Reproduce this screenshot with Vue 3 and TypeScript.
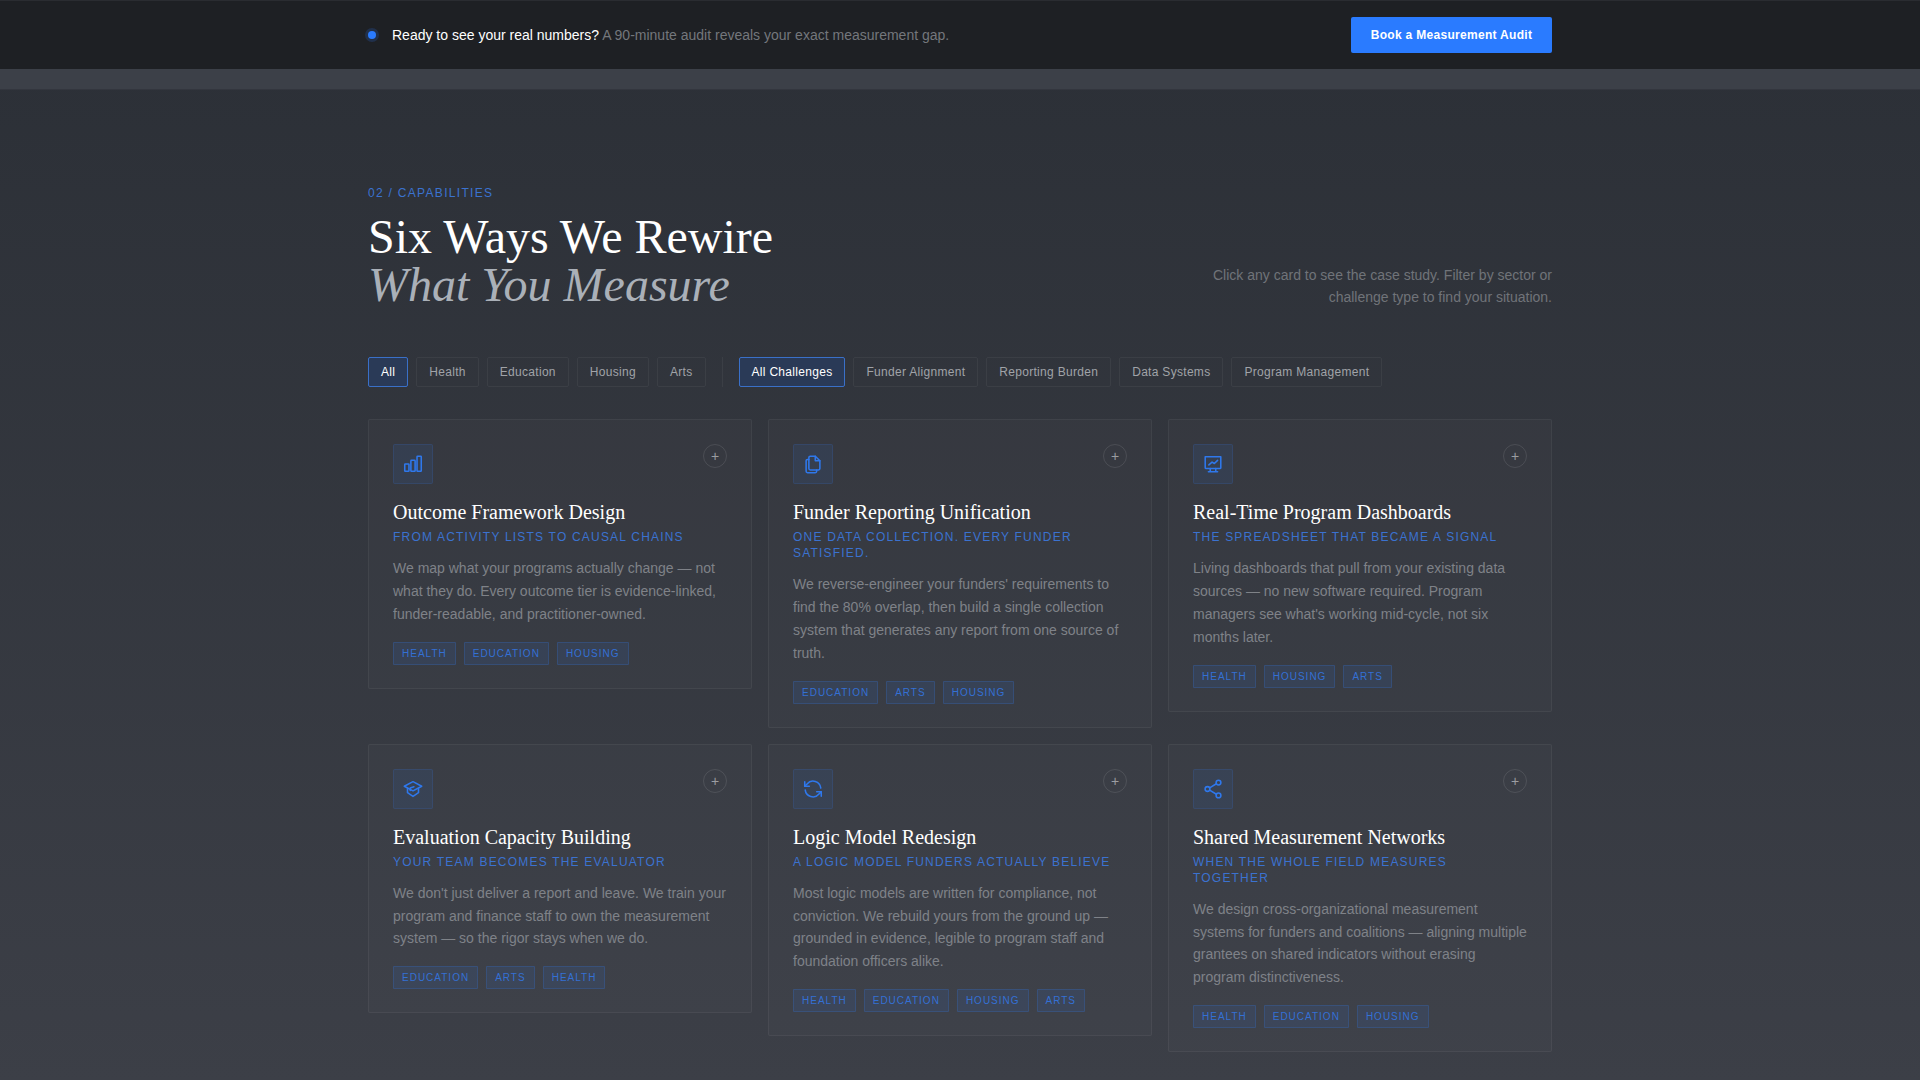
<script setup lang="ts">
interface Card { icon: string; title: string; sub: string; body: string; tags: string[] }
const sectors = ['All', 'Health', 'Education', 'Housing', 'Arts']
const challenges = ['All Challenges', 'Funder Alignment', 'Reporting Burden', 'Data Systems', 'Program Management']
const cards: Card[] = [
  { icon: 'bars', title: 'Outcome Framework Design', sub: 'From activity lists to causal chains', body: 'We map what your programs actually change — not what they do. Every outcome tier is evidence-linked, funder-readable, and practitioner-owned.', tags: ['Health', 'Education', 'Housing'] },
  { icon: 'files', title: 'Funder Reporting Unification', sub: 'One data collection. Every funder satisfied.', body: "We reverse-engineer your funders' requirements to find the 80% overlap, then build a single collection system that generates any report from one source of truth.", tags: ['Education', 'Arts', 'Housing'] },
  { icon: 'board', title: 'Real-Time Program Dashboards', sub: 'The spreadsheet that became a signal', body: "Living dashboards that pull from your existing data sources — no new software required. Program managers see what's working mid-cycle, not six months later.", tags: ['Health', 'Housing', 'Arts'] },
  { icon: 'cap', title: 'Evaluation Capacity Building', sub: 'Your team becomes the evaluator', body: "We don't just deliver a report and leave. We train your program and finance staff to own the measurement system — so the rigor stays when we do.", tags: ['Education', 'Arts', 'Health'] },
  { icon: 'cycle', title: 'Logic Model Redesign', sub: 'A logic model funders actually believe', body: 'Most logic models are written for compliance, not conviction. We rebuild yours from the ground up — grounded in evidence, legible to program staff and foundation officers alike.', tags: ['Health', 'Education', 'Housing', 'Arts'] },
  { icon: 'share', title: 'Shared Measurement Networks', sub: 'When the whole field measures together', body: 'We design cross-organizational measurement systems for funders and coalitions — aligning multiple grantees on shared indicators without erasing program distinctiveness.', tags: ['Health', 'Education', 'Housing'] },
]
</script>

<template>
  <div class="page">
    <header class="cta">
      <div class="cta-inner">
        <div class="cta-msg">
          <span class="dot"></span>
          <p><strong>Ready to see your real numbers?</strong> <span>A 90-minute audit reveals your exact measurement gap.</span></p>
        </div>
        <button class="cta-btn">Book a Measurement Audit</button>
      </div>
    </header>
    <div class="band"></div>

    <main class="section">
      <div class="eyebrow">02 / CAPABILITIES</div>
      <div class="head">
        <h1>Six Ways We Rewire<br /><em>What You Measure</em></h1>
        <p class="hint">Click any card to see the case study. Filter by sector or challenge type to find your situation.</p>
      </div>

      <div class="filters">
        <button v-for="(s, i) in sectors" :key="s" class="chip" :class="{ on: i === 0 }">{{ s }}</button>
        <span class="sep"></span>
        <button v-for="(c, i) in challenges" :key="c" class="chip" :class="{ on: i === 0 }">{{ c }}</button>
      </div>

      <div class="grid">
        <article v-for="c in cards" :key="c.title" class="card">
          <div class="card-top">
            <div class="ico">
              <svg viewBox="0 0 24 24" width="22" height="22" fill="none" stroke="currentColor" stroke-width="1.7" stroke-linecap="round" stroke-linejoin="round">
                <template v-if="c.icon === 'bars'">
                  <rect x="3" y="12" width="4.6" height="8" rx="0.6" />
                  <rect x="9.7" y="8" width="4.6" height="12" rx="0.6" />
                  <rect x="16.4" y="3.500" width="4.6" height="16.500" rx="0.6" />
                </template>
                <template v-else-if="c.icon === 'files'">
                  <path d="M9 3.500h5.500l5 5V17a1.500 1.500 0 0 1-1.500 1.500H9A1.500 1.500 0 0 1 7.500 17V5A1.500 1.500 0 0 1 9 3.500z" />
                  <path d="M14.500 3.500V8.500h5" />
                  <path d="M7.500 7H6A1.500 1.500 0 0 0 4.500 8.500V20A1.500 1.500 0 0 0 6 21.500h8.500A1.500 1.500 0 0 0 16 20v-1.500" />
                </template>
                <template v-else-if="c.icon === 'board'">
                  <path d="M3.500 4h17v12a1 1 0 0 1-1 1h-15a1 1 0 0 1-1-1z" />
                  <path d="M7.500 13l3.500-3 2.500 1.500 3.500-3.500" />
                  <path d="M9 17v3.500M15 17v3.500M7 20.500h10" />
                </template>
                <template v-else-if="c.icon === 'cap'">
                  <path d="M12 4l9.500 5-9.500 5-9.500-5z" />
                  <path d="M6 11.500V16l6 4 6-4v-4.500" />
                  <path d="M9 13.500v-2.500l4-1.500" />
                </template>
                <template v-else-if="c.icon === 'cycle'">
                  <path d="M20.500 11a8.500 8.500 0 0 0-15-4.500L3 9" />
                  <path d="M3 4v5h5" />
                  <path d="M3.500 13a8.500 8.500 0 0 0 15 4.500L21 15" />
                  <path d="M21 20v-5h-5" />
                </template>
                <template v-else>
                  <circle cx="18" cy="5" r="2.600" />
                  <circle cx="6" cy="12" r="2.600" />
                  <circle cx="18" cy="19" r="2.600" />
                  <path d="M8.300 10.700l7.400-4.400M8.300 13.300l7.400 4.400" />
                </template>
              </svg>
            </div>
            <span class="plus">+</span>
          </div>
          <h3>{{ c.title }}</h3>
          <div class="sub">{{ c.sub }}</div>
          <p class="body">{{ c.body }}</p>
          <div class="tags"><span v-for="t in c.tags" :key="t" class="tag">{{ t }}</span></div>
        </article>
      </div>
    </main>
  </div>
</template>

<style>
html, body { margin: 0; padding: 0; background: #2c3037; }
</style>

<style scoped>
.page {
  height: 1080px;
  overflow: hidden;
  background: linear-gradient(180deg, #2b2f36 0%, #3c3f47 100%);
  font-family: "Liberation Sans", Arial, sans-serif;
}
.cta {
  height: 69px;
  box-sizing: border-box;
  background: #1e2024;
  border-top: 1px solid #2a2c31;
}
.cta-inner {
  width: 1184px;
  height: 100%;
  margin: 0 auto;
  display: flex;
  align-items: center;
  justify-content: space-between;
}
.cta-msg { display: flex; align-items: center; gap: 16px; }
.cta-msg p { margin: 0; font-size: 14px; color: #74777c; }
.cta-msg strong { font-weight: 400; color: #fff; }
.dot {
  width: 8px;
  height: 8px;
  border-radius: 50%;
  background: #2a7bff;
  box-shadow: 0 0 0 3px rgba(42, 123, 255, 0.18);
}
.cta-btn {
  width: 201px;
  height: 36px;
  padding: 0;
  border: 0;
  border-radius: 2px;
  background: #2a7bff;
  color: #fff;
  font: 700 12px "Liberation Sans", Arial, sans-serif;
  letter-spacing: 0.3px;
}
.band {
  height: 21px;
  background: #3c4048;
  border-bottom: 1px solid #33363e;
  box-sizing: border-box;
}
.section { width: 1184px; margin: 0 auto; padding-top: 96px; }
.eyebrow { font-size: 12px; line-height: 14px; letter-spacing: 1.3px; color: #3b72d0; }
.head { display: flex; justify-content: space-between; align-items: flex-end; margin-top: 13px; }
h1 {
  margin: 0;
  font: 400 48px/48px "Liberation Serif", "Times New Roman", serif;
  color: #fff;
}
h1 em { color: #aab0b8; }
.hint {
  width: 360px;
  margin: 0 0 1px;
  text-align: right;
  font-size: 14px;
  line-height: 22px;
  color: #707379;
}
.filters { display: flex; align-items: center; gap: 8px; margin-top: 48px; }
.chip {
  height: 30px;
  box-sizing: border-box;
  padding: 0 12px;
  border: 1px solid rgba(255, 255, 255, 0.05);
  border-radius: 2px;
  background: transparent;
  color: #a0a3a8;
  font: 400 12px "Liberation Sans", Arial, sans-serif;
  letter-spacing: 0.3px;
}
.chip.on { background: #2a3a57; border-color: #3a70c8; color: #fff; }
.sep { width: 1px; height: 30px; margin: 0 8px; background: rgba(255, 255, 255, 0.05); }
.grid {
  display: grid;
  grid-template-columns: repeat(3, 1fr);
  gap: 16px;
  align-items: start;
  margin-top: 32px;
}
.card {
  box-sizing: border-box;
  padding: 24px 24px 23px;
  border: 1px solid rgba(255, 255, 255, 0.05);
  border-radius: 2px;
  background: rgba(255, 255, 255, 0.02);
}
.card-top { display: flex; justify-content: space-between; align-items: flex-start; margin-bottom: 16px; }
.ico {
  width: 40px;
  height: 40px;
  box-sizing: border-box;
  display: flex;
  align-items: center;
  justify-content: center;
  border: 1px solid rgba(53, 106, 196, 0.2);
  border-radius: 2px;
  background: rgba(53, 106, 196, 0.12);
  color: #2f78ec;
}
.plus {
  width: 24px;
  height: 24px;
  box-sizing: border-box;
  display: flex;
  align-items: center;
  justify-content: center;
  border: 1px solid rgba(255, 255, 255, 0.1);
  border-radius: 50%;
  color: #9a9da2;
  font-size: 14px;
  line-height: 1;
}
h3 {
  margin: 0 0 5px;
  font: 400 20px/24px "Liberation Serif", "Times New Roman", serif;
  color: #fff;
}
.sub {
  font-size: 12px;
  line-height: 16px;
  letter-spacing: 1.2px;
  padding-right: 4px;
  text-transform: uppercase;
  color: #3b72d0;
}
.body {
  margin: 12px 0 0;
  font-size: 14px;
  line-height: 22.9px;
  color: #7f8288;
}
.tags { display: flex; gap: 8px; margin-top: 16px; }
.tag {
  box-sizing: border-box;
  height: 23px;
  padding: 0 8px;
  display: flex;
  align-items: center;
  border: 1px solid rgba(53, 106, 196, 0.3);
  border-radius: 1px;
  background: rgba(53, 106, 196, 0.14);
  color: #3470d4;
  font-size: 10px;
  letter-spacing: 1px;
  text-transform: uppercase;
}
</style>
